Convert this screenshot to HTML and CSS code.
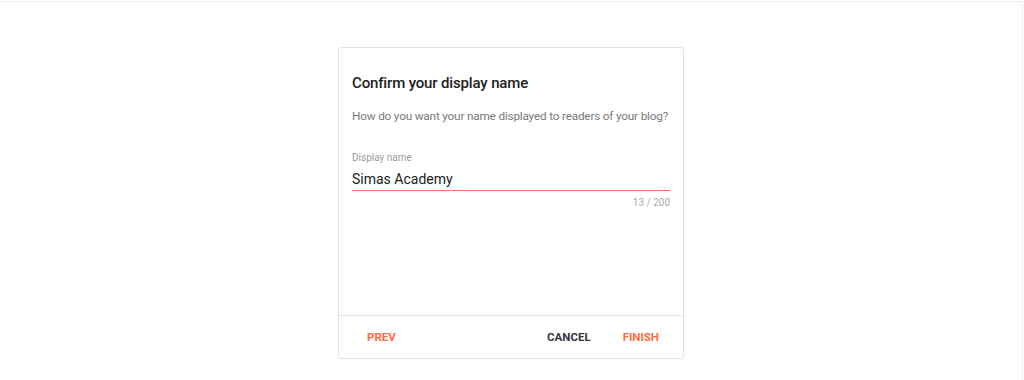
FILE: index.html
```html
<!DOCTYPE html>
<html>
<head>
<meta charset="utf-8">
<link rel="stylesheet" href="styles.css">
</head>
<body>
<div class="page">
  <div class="card">
    <div class="card-body">
      <h2 class="title">Confirm your display name</h2>
      <p class="subtitle">How do you want your name displayed to readers of your blog?</p>
      <div class="field">
        <label class="field-label">Display name</label>
        <div class="field-input">Simas Academy</div>
        <div class="field-counter">13 / 200</div>
      </div>
    </div>
    <div class="card-footer">
      <button class="btn btn-accent">Prev</button>
      <div class="spacer"></div>
      <button class="btn btn-dark">Cancel</button>
      <button class="btn btn-accent">Finish</button>
    </div>
  </div>
</div>
</body>
</html>
```
FILE: styles.css
```css
* { box-sizing: border-box; }
html, body { margin: 0; padding: 0; background: #fff; }
body { font-family: Roboto, "Noto Sans", sans-serif; }
.page {
  margin-top: 1px;
  height: 379px;
  width: 1023px;
  border-top: 1px solid #eeeeee;
  border-right: 1px solid #eeeeee;
  padding-top: 45px;
}
.card {
  width: 346px;
  height: 312px;
  margin: 0 auto;
  border: 1px solid #dfe3e6;
  border-radius: 3px;
  display: flex;
  flex-direction: column;
}
.card-body {
  flex: 1;
  padding: 24px 13px 0 13px;
}
.title {
  margin: 0;
  font-size: 15px;
  letter-spacing: -0.15px;
  line-height: 22px;
  font-weight: 500;
  color: #212121;
}
.subtitle {
  margin: 12px 0 0;
  font-size: 11.8px;
  letter-spacing: -0.2px;
  line-height: 20px;
  color: #7a7a7a;
  white-space: nowrap;
}
.field { margin-top: 25px; }
.field-label {
  display: block;
  font-size: 10px;
  line-height: 14px;
  color: #9a9a9a;
}
.field-input {
  margin-top: 4px;
  font-size: 14px;
  line-height: 20px;
  color: #212121;
  padding-bottom: 1px;
  border-bottom: 1px solid #f47a4f;
}
.field-counter {
  text-align: right;
  margin-top: 5px;
  font-size: 10px;
  line-height: 14px;
  color: #a8a8a8;
}
.card-footer {
  height: 43px;
  border-top: 1px solid #dfe3e6;
  display: flex;
  align-items: center;
  padding: 0 8px 0 12px;
}
.spacer { flex: 1; }
.btn {
  background: none;
  border: 0;
  padding: 8px 16px;
  font-family: Roboto, "Noto Sans", sans-serif;
  font-size: 11.5px;
  font-weight: 700;
  text-transform: uppercase;
  letter-spacing: 0;
  line-height: 16px;
  cursor: pointer;
}
.btn-accent { color: #ff6b3d; }
.btn-dark { color: #333639; }
```
